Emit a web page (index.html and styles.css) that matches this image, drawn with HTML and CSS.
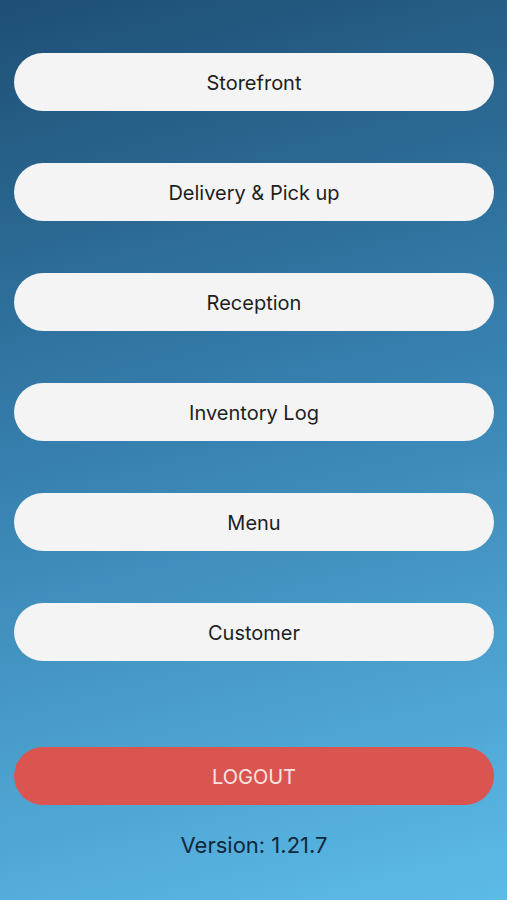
FILE: index.html
```html
<!DOCTYPE html>
<html lang="en">
<head>
    <meta charset="UTF-8">
    <meta name="viewport" content="width=device-width, initial-scale=1.0">
    <title>Home</title>
    <link rel="stylesheet" href="styles.css">
</head>
<body>
<div class="screen">
    <div class="menu">
        <button class="menu-btn">Storefront</button>
        <button class="menu-btn">Delivery &amp; Pick up</button>
        <button class="menu-btn">Reception</button>
        <button class="menu-btn">Inventory Log</button>
        <button class="menu-btn">Menu</button>
        <button class="menu-btn">Customer</button>
    </div>
    <button class="logout-btn">LOGOUT</button>
    <div class="version">Version: 1.21.7</div>
</div>
</body>
</html>
```

FILE: styles.css
```css
html, body {
    margin: 0;
    height: 100%;
}

body {
    font-family: Inter, "Noto Sans", Arial, sans-serif;
    background: linear-gradient(165deg, #1e4f74 0%, #367fae 45%, #5dbbe8 100%);
}

.screen {
    display: flex;
    flex-direction: column;
    padding: 53px 13px 0 14px;
    height: 100%;
    box-sizing: border-box;
}

.menu {
    display: flex;
    flex-direction: column;
    gap: 52px;
}

.menu-btn,
.logout-btn {
    height: 58px;
    border: none;
    border-radius: 29px;
    font-family: inherit;
    font-size: 20px;
    width: 100%;
    padding: 2px 0 0;
}

.menu-btn {
    background: #f4f4f4;
    color: #1e1e1e;
}

.logout-btn {
    margin-top: 86px;
    background: #da5550;
    color: #fbe4e2;
}

.version {
    margin-top: 27px;
    text-align: center;
    font-size: 22px;
    color: #10283c;
}
```
